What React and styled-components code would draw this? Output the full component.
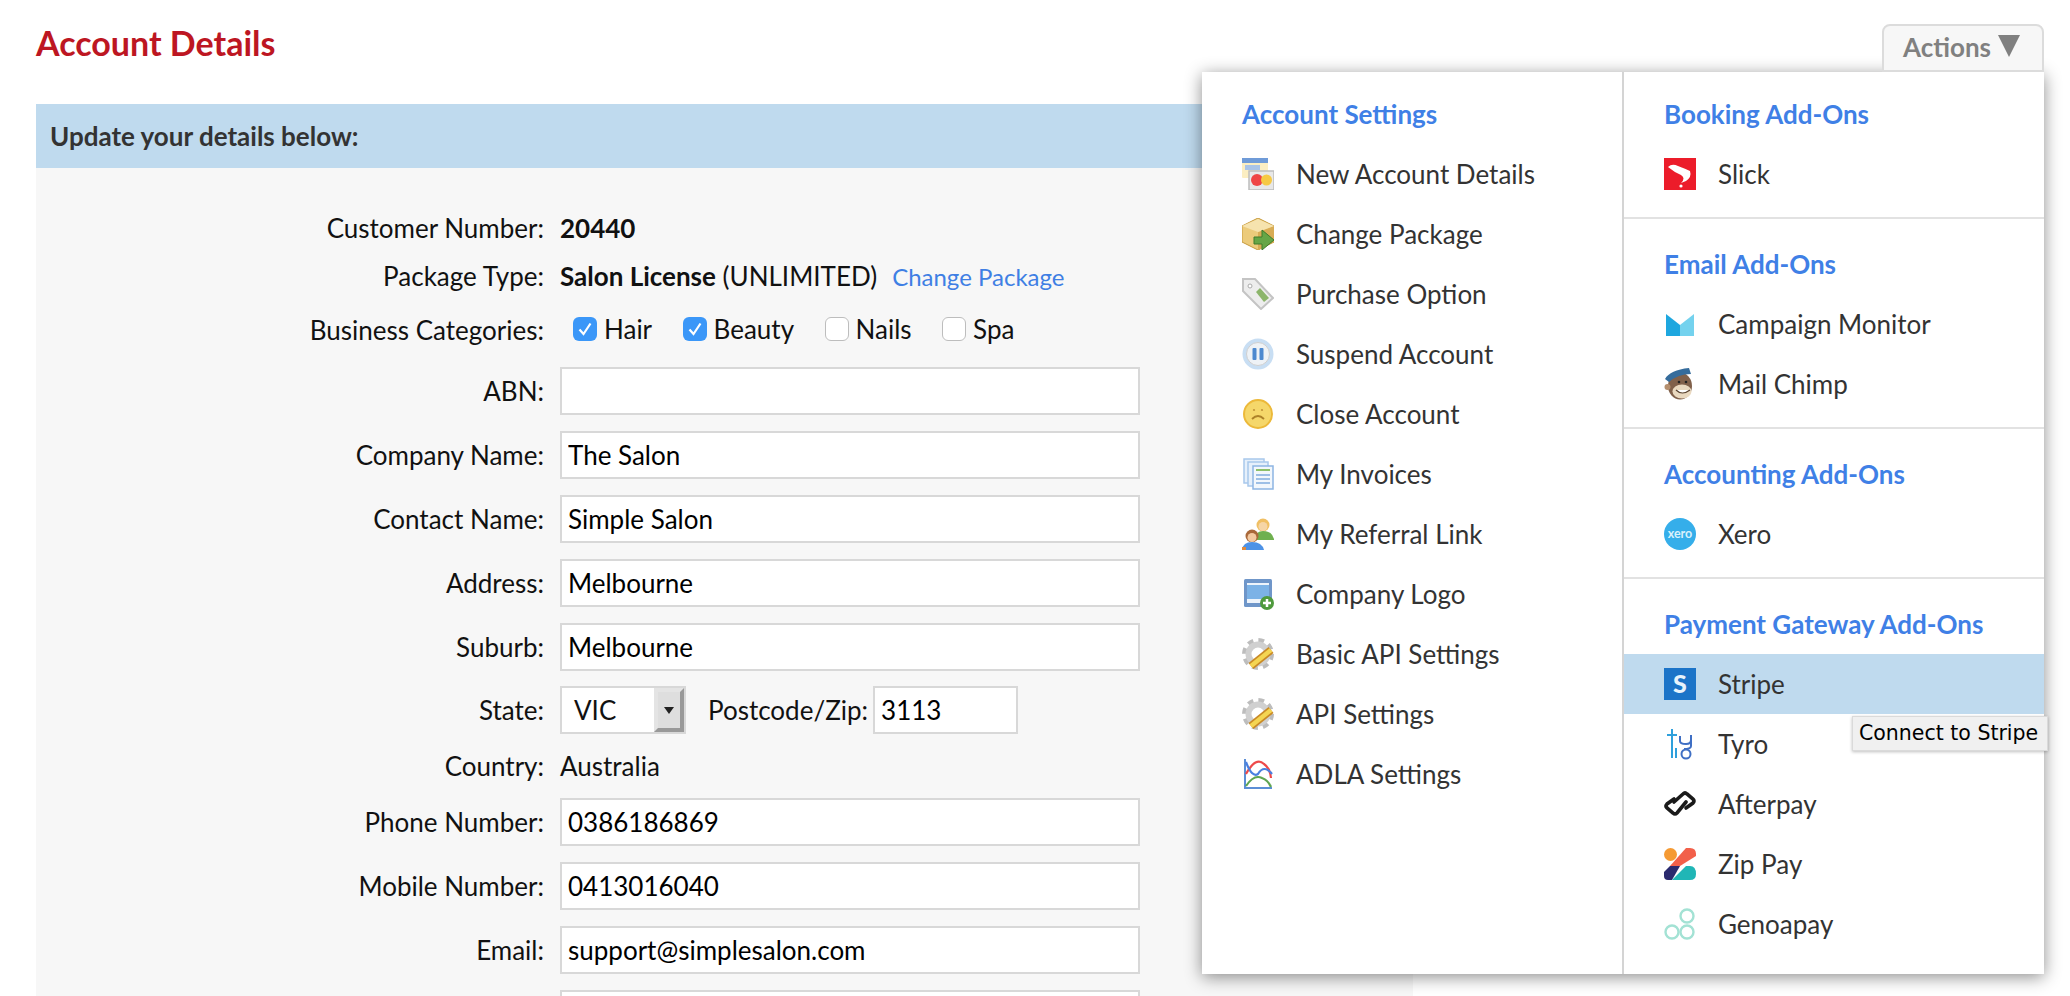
import React from 'react';
import styled, { createGlobalStyle } from 'styled-components';

const GlobalStyle = createGlobalStyle`
  html, body {
    margin: 0;
    height: 996px;
    overflow: hidden;
    background: #fff;
  }
  body {
    font-family: Lato, "Open Sans", sans-serif;
    font-size: 26px;
    color: #111;
  }
`;

const Page = styled.div`
  display: flex;
  flex-direction: column;
  box-sizing: border-box;
  height: 996px;
  padding: 24px 26px 0 36px;
`;

const Header = styled.header`
  display: flex;
  flex: none;
  justify-content: space-between;
  height: 48px;
  margin-bottom: 32px;
`;

const Title = styled.h1`
  margin: 0;
  font-size: 34px;
  line-height: 38px;
  font-weight: 700;
  color: #bd1622;
`;

const ActionsWrap = styled.div`
  position: relative;
`;

const ActionsTab = styled.button`
  position: relative;
  z-index: 3;
  display: flex;
  align-items: center;
  gap: 7px;
  box-sizing: border-box;
  width: 162px;
  height: 48px;
  padding: 0 0 2px 19px;
  border: 2px solid #dcdcdc;
  border-radius: 8px 8px 0 0;
  background: #f7f7f7;
  color: #808080;
  font: 700 26px Lato, sans-serif;
`;

const Caret = styled.span`
  width: 0;
  height: 0;
  margin-top: -3px;
  border-left: 11px solid transparent;
  border-right: 11px solid transparent;
  border-top: 22px solid #808080;
`;

const Menu = styled.div`
  position: absolute;
  z-index: 2;
  top: 48px;
  right: 0;
  display: grid;
  grid-template-columns: 420px 422px;
  width: 842px;
  height: 902px;
  background: #fff;
  box-shadow: 0 3px 16px rgba(0, 0, 0, 0.45);
`;

const MenuColumn = styled.div`
  & + & {
    border-left: 2px solid #d4d4d4;
  }
`;

const MenuSection = styled.section`
  padding: 30px 0 13px;
  border-bottom: 2px solid #e2e2e2;

  &:first-child {
    padding-top: 27px;
  }
  &:last-child {
    border-bottom: 0;
  }
`;

const MenuHeading = styled.h3`
  margin: 0 0 15px;
  padding-left: 40px;
  font-size: 26px;
  line-height: 30px;
  font-weight: 700;
  color: #3f80e6;
`;

const MenuItem = styled.div`
  display: flex;
  align-items: center;
  gap: 22px;
  height: 60px;
  padding-left: 40px;
  color: #333;
  font-size: 26px;
  background: ${(p) => (p.$active ? '#bfdaee' : 'transparent')};
`;

const Tooltip = styled.div`
  position: absolute;
  left: 650px;
  top: 644px;
  box-sizing: border-box;
  width: 196px;
  height: 35px;
  padding-left: 6px;
  line-height: 33px;
  font-family: "DejaVu Sans", Verdana, sans-serif;
  font-size: 20.5px;
  white-space: nowrap;
  color: #000;
  background: #f0f0f0;
  border: 1px solid #dadada;
  box-shadow: 0 1px 3px rgba(0, 0, 0, 0.25);
`;

const Banner = styled.div`
  flex: none;
  width: 1377px;
  height: 64px;
  box-sizing: border-box;
  padding-left: 14px;
  line-height: 64px;
  font-weight: 700;
  font-size: 26px;
  color: #333;
  background: #bfdaee;
`;

const Panel = styled.div`
  display: flex;
  flex: 1;
  flex-direction: column;
  gap: 16px;
  box-sizing: border-box;
  width: 1377px;
  min-height: 0;
  overflow: hidden;
  padding-top: 44px;
  background: #f7f7f7;
`;

const Row = styled.div`
  display: flex;
  flex: none;
  align-items: center;
  min-height: ${(p) => p.$height || 48}px;
`;

const StateRow = styled(Row)`
  margin-top: -1px;
`;

const Label = styled.label`
  flex: none;
  width: 508px;
  margin-right: 16px;
  text-align: right;
  white-space: nowrap;
`;

const Strong = styled.strong`
  font-weight: 700;
`;

const PackageLink = styled.a`
  margin-left: 15px;
  color: #3f7fe4;
  font-size: 24px;
`;

const Field = styled.input`
  box-sizing: border-box;
  width: ${(p) => p.$width || 580}px;
  height: 48px;
  padding: 0 6px;
  border: 2px solid #d8d8d8;
  border-radius: 0;
  outline: 0;
  background: #fff;
  color: #000;
  font: 400 26px Lato, sans-serif;
`;

const InlineLabel = styled.span`
  margin: 0 5px 0 22px;
  white-space: nowrap;
`;

const SelectBox = styled.div`
  display: flex;
  align-items: center;
  justify-content: space-between;
  box-sizing: border-box;
  width: 126px;
  height: 48px;
  padding-left: 12px;
  border: 2px solid #d8d8d8;
  background: #fff;
`;

const SelectArrow = styled.span`
  display: flex;
  align-items: center;
  justify-content: center;
  box-sizing: border-box;
  width: 30px;
  height: 44px;
  border-style: solid;
  border-width: 4px;
  border-color: #e4e4e4 #999 #999 #e4e4e4;
  background: #dedede;

  &::after {
    content: '';
    border-left: 5px solid transparent;
    border-right: 5px solid transparent;
    border-top: 7px solid #222;
  }
`;

const Categories = styled.div`
  display: flex;
  align-items: center;
  gap: 30.5px;
  margin-top: -2px;
  padding-left: 13px;
`;

const Category = styled.span`
  display: flex;
  align-items: center;
  gap: 7px;
`;

const CheckBox = styled.span`
  display: flex;
  align-items: center;
  justify-content: center;
  box-sizing: border-box;
  width: 24px;
  height: 24px;
  border-radius: 6px;
  border: ${(p) => (p.$checked ? '0' : '1px solid #bdbdbd')};
  background: ${(p) => (p.$checked ? '#3b97f8' : '#fff')};
`;

const IconSvg = styled.svg`
  flex: none;
  width: 32px;
  height: 32px;
`;

const Icon = ({ children }) => <IconSvg viewBox="0 0 32 32">{children}</IconSvg>;

const gear = (
  <>
    <circle cx="16" cy="16" r="13.5" fill="none" stroke="#bdbdbd" strokeWidth="5" strokeDasharray="5.6 5" />
    <circle cx="16" cy="16" r="9.5" fill="none" stroke="#d0d0d0" strokeWidth="6" />
    <circle cx="16" cy="16" r="4" fill="#fff" />
    <path d="M9 28 L29 12" stroke="#c98a26" strokeWidth="8" />
    <path d="M9 28 L29 12" stroke="#f4d552" strokeWidth="4.5" />
  </>
);

const icons = {
  card: (
    <>
      <rect x="0" y="0" width="26" height="20" rx="1" fill="#fbeec2" />
      <rect x="0" y="0" width="26" height="5" fill="#6f9bd8" />
      <rect x="3" y="7" width="15" height="5" fill="#a9c4e8" />
      <rect x="7" y="13" width="25" height="19" fill="#e8e8e8" stroke="#bdbdbd" strokeWidth="1.5" />
      <circle cx="15" cy="22" r="6" fill="#ef4444" />
      <circle cx="24.5" cy="22" r="5.5" fill="#f6c945" />
    </>
  ),
  box: (
    <>
      <path d="M16 0 L32 8 V24 L16 32 L0 24 V8 Z" fill="#eccb7b" stroke="#c69a3c" strokeWidth="1" />
      <path d="M16 14 L32 8 V24 L16 32 Z" fill="#d8ac55" />
      <path d="M0 8 L16 14 L32 8 L16 1 Z" fill="#f6e3ae" />
      <path d="M12 19 H20 V12 L32 22 L20 32 V26 H12 Z" fill="#66a646" stroke="#3f7d2c" strokeWidth="1" />
    </>
  ),
  tag: (
    <>
      <path d="M1 1 H13 L31 20 L19 31 L1 13 Z" fill="#ededed" stroke="#c4c4c4" strokeWidth="2" />
      <circle cx="8" cy="8" r="2" fill="#fff" stroke="#aaa" />
      <path d="M14 14 L18 10 L27 20 L22 24 Z" fill="#8cb56b" />
    </>
  ),
  pause: (
    <>
      <circle cx="16" cy="16" r="15.5" fill="#c8def3" />
      <circle cx="16" cy="16" r="11.5" fill="#eef2f6" stroke="#cfcfcf" />
      <rect x="10.5" y="10" width="4" height="12" rx="1" fill="#4d89cf" />
      <rect x="17.5" y="10" width="4" height="12" rx="1" fill="#4d89cf" />
    </>
  ),
  sad: (
    <>
      <circle cx="16" cy="16" r="14" fill="#f5d76a" stroke="#ecb93a" strokeWidth="2" />
      <circle cx="12" cy="12" r="1.1" fill="#c2953a" />
      <circle cx="20" cy="12" r="1.1" fill="#c2953a" />
      <path d="M10 21 Q16 15 22 21" fill="none" stroke="#ad8128" strokeWidth="1.8" />
    </>
  ),
  invoices: (
    <>
      <rect x="2" y="1" width="20" height="24" fill="#e6f0fb" stroke="#a8c8ec" strokeWidth="1.5" />
      <rect x="6" y="4" width="20" height="24" fill="#e6f0fb" stroke="#a8c8ec" strokeWidth="1.5" />
      <rect x="11" y="8" width="20" height="23" fill="#f2f7fc" stroke="#8db5e3" strokeWidth="1.5" />
      <rect x="14" y="11" width="14" height="2" fill="#8cc06a" />
      <path d="M14 17 H28 M14 21 H28 M14 25 H28" stroke="#9dbfe6" strokeWidth="2" />
    </>
  ),
  people: (
    <>
      <circle cx="21" cy="7" r="6.5" fill="#f0bf63" />
      <circle cx="21" cy="8.5" r="4.5" fill="#f6d5a6" />
      <path d="M12 21 Q14 13 21 13 Q30 13 32 21 V22 H12 Z" fill="#6fb04f" />
      <circle cx="10" cy="18" r="6.5" fill="#a9683a" />
      <circle cx="10" cy="19.5" r="4.5" fill="#f3c9a0" />
      <path d="M0 32 Q1 24 10 24 Q20 24 22 32 Z" fill="#4e92e6" />
      <rect x="0" y="29" width="4" height="3" fill="#e08a3c" />
    </>
  ),
  logo: (
    <>
      <rect x="2" y="1" width="28" height="28" rx="1.5" fill="#6f96c9" />
      <rect x="5" y="5" width="22" height="20" fill="#eef4fb" />
      <rect x="5" y="7" width="22" height="14" fill="#7cb2e6" />
      <circle cx="25" cy="25" r="7" fill="#4f9a3d" />
      <path d="M21 25 H29 M25 21 V29" stroke="#fff" strokeWidth="2.5" />
    </>
  ),
  gear,
  chart: (
    <>
      <path d="M3 1 V30 H30" fill="none" stroke="#5b8ed6" strokeWidth="2" />
      <path d="M4 16 Q14 -2 22 6 Q28 10 29 20" fill="none" stroke="#ee4a4a" strokeWidth="2.2" />
      <path d="M4 4 Q10 20 16 16 Q22 6 30 16" fill="none" stroke="#4a80e0" strokeWidth="2.2" />
      <path d="M4 28 Q12 16 20 20 Q26 22 29 29" fill="none" stroke="#5ea552" strokeWidth="2.2" />
    </>
  ),
  slick: (
    <>
      <rect width="32" height="32" fill="#ec1c2a" />
      <path d="M4 9 Q8 5 14 8 Q22 11 26 13 Q28 19 22 23 L17 25 Q22 20 17 17 Q10 14 4 9 Z" fill="#fff" />
      <circle cx="17" cy="28" r="1.6" fill="#fff" />
    </>
  ),
  campaign: (
    <>
      <path d="M2 6 L16 17 V28 H2 Z" fill="#1ea7df" />
      <path d="M30 6 L16 17 V28 H30 Z" fill="#74d2ee" />
    </>
  ),
  chimp: (
    <>
      <ellipse cx="16" cy="18" rx="12" ry="13.5" fill="#80604a" />
      <circle cx="3.5" cy="19" r="3" fill="#b58f6e" />
      <ellipse cx="18" cy="23.5" rx="9.5" ry="7" fill="#e9d8bf" />
      <path d="M12 22 Q18 28 26 22" fill="#fff" stroke="#5a4432" strokeWidth="1.2" />
      <path d="M1 11 Q6 2 25 0 L27 6 Q14 6 5 14 Z" fill="#356c9c" />
      <circle cx="15" cy="14" r="1.3" fill="#222" />
      <circle cx="22" cy="14" r="1.3" fill="#222" />
    </>
  ),
  xero: (
    <>
      <circle cx="16" cy="16" r="16" fill="#35aeea" />
      <text x="16" y="20" textAnchor="middle" fontFamily="Lato, sans-serif" fontWeight="700" fontSize="12.5" fill="#d8f1fc">xero</text>
    </>
  ),
  stripe: (
    <>
      <rect width="32" height="32" fill="#1c74c8" />
      <text x="16" y="25" textAnchor="middle" fontFamily="Lato, sans-serif" fontWeight="900" fontSize="25" fill="#e8f3fb">S</text>
    </>
  ),
  tyro: (
    <>
      <path d="M8 1 V30 M3 7 H13" stroke="#2fa0dc" strokeWidth="2" fill="none" />
      <path d="M16 8 V13 Q16 16 22 16 Q27 16 27 12 V7 M27 12 V18 Q27 21 20 21" stroke="#3f6fc4" strokeWidth="2" fill="none" />
      <path d="M12 20 V30" stroke="#2fa0dc" strokeWidth="2" />
      <circle cx="22" cy="26" r="4.5" fill="none" stroke="#3f6fc4" strokeWidth="2" />
    </>
  ),
  afterpay: (
    <>
      <path d="M10 14 L19 6 Q21 4 23 6 L29 11 Q31 13 29 15 L22 20" fill="none" stroke="#1a1a1a" strokeWidth="3.6" strokeLinecap="round" />
      <path d="M22 14 L13 25 Q11 27 9 25 L3 20 Q1 18 3 16 L10 11" fill="none" stroke="#1a1a1a" strokeWidth="3.6" strokeLinecap="round" />
    </>
  ),
  zip: (
    <>
      <circle cx="6.5" cy="6.5" r="6.5" fill="#f59a33" />
      <path d="M22 0 H26 Q32 0 32 6 V8 L16 18 H6 Z" fill="#f2604a" />
      <path d="M6 18 H16 L8 32 H4 Q0 32 0 28 V24 Z" fill="#2b2a6e" />
      <path d="M22 18 H26 Q32 18 32 26 Q32 32 26 32 H8 Z" fill="#20b6b6" />
    </>
  ),
  genoa: (
    <>
      <circle cx="23" cy="8" r="6.5" fill="none" stroke="#a3e2d4" strokeWidth="2.4" />
      <circle cx="8" cy="24" r="6.5" fill="none" stroke="#a3e2d4" strokeWidth="2.4" />
      <circle cx="23" cy="24" r="6.5" fill="none" stroke="#a3e2d4" strokeWidth="2.4" />
    </>
  ),
};

const accountItems = [
  ['card', 'New Account Details'],
  ['box', 'Change Package'],
  ['tag', 'Purchase Option'],
  ['pause', 'Suspend Account'],
  ['sad', 'Close Account'],
  ['invoices', 'My Invoices'],
  ['people', 'My Referral Link'],
  ['logo', 'Company Logo'],
  ['gear', 'Basic API Settings'],
  ['gear', 'API Settings'],
  ['chart', 'ADLA Settings'],
];

const addOnSections = [
  { title: 'Booking Add-Ons', items: [['slick', 'Slick']] },
  { title: 'Email Add-Ons', items: [['campaign', 'Campaign Monitor'], ['chimp', 'Mail Chimp']] },
  { title: 'Accounting Add-Ons', items: [['xero', 'Xero']] },
  {
    title: 'Payment Gateway Add-Ons',
    items: [['stripe', 'Stripe'], ['tyro', 'Tyro'], ['afterpay', 'Afterpay'], ['zip', 'Zip Pay'], ['genoa', 'Genoapay']],
  },
];

const categories = [
  ['Hair', true],
  ['Beauty', true],
  ['Nails', false],
  ['Spa', false],
];

function MenuRows({ items }) {
  return items.map(([icon, text]) => (
    <MenuItem key={text} $active={text === 'Stripe'}>
      <Icon>{icons[icon]}</Icon>
      {text}
    </MenuItem>
  ));
}

function TextRow({ label, value }) {
  return (
    <Row>
      <Label>{label}</Label>
      <Field readOnly value={value} />
    </Row>
  );
}

export default function App() {
  return (
    <Page>
      <GlobalStyle />
      <Header>
        <Title>Account Details</Title>
        <ActionsWrap>
          <ActionsTab>
            Actions
            <Caret />
          </ActionsTab>
          <Menu>
            <MenuColumn>
              <MenuSection>
                <MenuHeading>Account Settings</MenuHeading>
                <MenuRows items={accountItems} />
              </MenuSection>
            </MenuColumn>
            <MenuColumn>
              {addOnSections.map((section) => (
                <MenuSection key={section.title}>
                  <MenuHeading>{section.title}</MenuHeading>
                  <MenuRows items={section.items} />
                </MenuSection>
              ))}
            </MenuColumn>
            <Tooltip>Connect to Stripe</Tooltip>
          </Menu>
        </ActionsWrap>
      </Header>
      <Banner>Update your details below:</Banner>
      <Panel>
        <Row $height={32}>
          <Label>Customer Number:</Label>
          <Strong>20440</Strong>
        </Row>
        <Row $height={32}>
          <Label>Package Type:</Label>
          <Strong>Salon License</Strong>&nbsp;(UNLIMITED)
          <PackageLink>Change Package</PackageLink>
        </Row>
        <Row $height={43}>
          <Label>Business Categories:</Label>
          <Categories>
            {categories.map(([name, checked]) => (
              <Category key={name}>
                <CheckBox $checked={checked}>
                  {checked && (
                    <svg width="16" height="16" viewBox="0 0 16 16">
                      <path d="M2.5 8.5 L6.5 13 L13.5 2.5" fill="none" stroke="#fff" strokeWidth="2.2" />
                    </svg>
                  )}
                </CheckBox>
                {name}
              </Category>
            ))}
          </Categories>
        </Row>
        <TextRow label="ABN:" value="" />
        <TextRow label="Company Name:" value="The Salon" />
        <TextRow label="Contact Name:" value="Simple Salon" />
        <TextRow label="Address:" value="Melbourne" />
        <TextRow label="Suburb:" value="Melbourne" />
        <StateRow>
          <Label>State:</Label>
          <SelectBox>
            VIC
            <SelectArrow />
          </SelectBox>
          <InlineLabel>Postcode/Zip:</InlineLabel>
          <Field readOnly value="3113" $width={145} />
        </StateRow>
        <Row $height={32}>
          <Label>Country:</Label>
          Australia
        </Row>
        <TextRow label="Phone Number:" value="0386186869" />
        <TextRow label="Mobile Number:" value="0413016040" />
        <TextRow label="Email:" value="support@simplesalon.com" />
        <TextRow label="" value="" />
      </Panel>
    </Page>
  );
}
